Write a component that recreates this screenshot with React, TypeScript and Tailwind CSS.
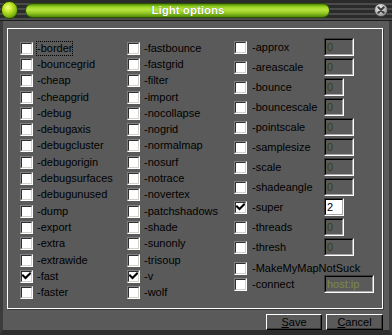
import React from 'react'

const leftCol = [
  '-border', '-bouncegrid', '-cheap', '-cheapgrid', '-debug', '-debugaxis', '-debugcluster', '-debugorigin',
  '-debugsurfaces', '-debugunused', '-dump', '-export', '-extra', '-extrawide', '-fast', '-faster',
]
const midCol = [
  '-fastbounce', '-fastgrid', '-filter', '-import', '-nocollapse', '-nogrid', '-normalmap', '-nosurf',
  '-notrace', '-novertex', '-patchshadows', '-shade', '-sunonly', '-trisoup', '-v', '-wolf',
]
const rightCol: { label: string; narrow?: boolean; checked?: boolean; value?: string }[] = [
  { label: '-approx' },
  { label: '-areascale' },
  { label: '-bounce', narrow: true },
  { label: '-bouncescale', narrow: true },
  { label: '-pointscale' },
  { label: '-samplesize' },
  { label: '-scale' },
  { label: '-shadeangle' },
  { label: '-super', narrow: true, checked: true, value: '2' },
  { label: '-threads', narrow: true },
  { label: '-thresh' },
]
const checkedSet = ['-fast', '-v']

function CheckBox({ checked }: { checked?: boolean }) {
  return (
    <div className="w-[13px] h-[13px] shrink-0 border border-t-[#808080] border-l-[#808080] border-b-white border-r-white">
      <div className="w-full h-full bg-white border border-t-[#303030] border-l-[#303030] border-b-[#d4d0c8] border-r-[#d4d0c8] flex items-center justify-center">
        {checked && (
          <svg width="9" height="9" viewBox="0 0 9 9">
            <path d="M1 3.5 L3.5 6 L8 1.5" fill="none" stroke="#000" strokeWidth="2" strokeLinecap="square" />
          </svg>
        )}
      </div>
    </div>
  )
}

function Field({ width, value, enabled, tone }: { width: string; value: string; enabled?: boolean; tone?: string }) {
  return (
    <div className={`${width} h-[18px] border border-t-[#3a3a3a] border-l-[#3a3a3a] border-b-white border-r-white`}>
      <div
        className={`w-full h-full border border-t-black border-l-black border-b-[#a8a8a8] border-r-[#a8a8a8] flex items-center pl-[1px] text-[11px] leading-[13px] ${
          enabled ? 'bg-white text-black' : `bg-[#5a5a5a] ${tone ?? 'text-[#33420f]'}`
        }`}
      >
        {value}
      </div>
    </div>
  )
}

function Row({ label, checked, focus }: { label: string; checked?: boolean; focus?: boolean }) {
  return (
    <div className="h-[16.3px] flex items-center gap-[4px]">
      <CheckBox checked={checked} />
      <span className={`leading-[13px] ${focus ? 'outline outline-1 outline-dotted outline-black' : ''}`}>{label}</span>
    </div>
  )
}

export default function App() {
  return (
    <div
      className="w-[392px] h-[335px] flex flex-col bg-[#5a5a5a] text-black text-[11px] overflow-hidden"
      style={{ fontFamily: "'Liberation Sans', Arial, sans-serif" }}
    >
      {/* Title bar */}
      <div className="h-[21px] shrink-0 flex items-center border-b border-[#1e1e1e] bg-[repeating-linear-gradient(180deg,#2b2b2b_0px,#2b2b2b_3px,#4b4b4b_3px,#4b4b4b_5px)]">
        <div className="ml-[1px] w-[17px] h-[18px] rounded-full border border-[#2a4a00] bg-[radial-gradient(circle_at_40%_35%,#f2ff8a_0%,#c4e82a_30%,#7db512_65%,#335f02_100%)]" />
        <div className="ml-[7px] w-[305px] h-[15px] rounded-full border border-[#2c5200] bg-[linear-gradient(180deg,#4f8a0a_0%,#9ad424_22%,#b8e43e_45%,#92c822_70%,#4f8c0c_100%)] flex items-center justify-center pl-[21px]">
          <span className="text-white font-bold text-[11.5px] leading-[13px] [text-shadow:0_0_1px_#3a6a00]">Light options</span>
        </div>
        <div className="flex-1" />
        <svg className="mr-[4px]" width="14" height="14" viewBox="0 0 14 14">
          <defs>
            <radialGradient id="cg" cx="40%" cy="35%" r="70%">
              <stop offset="0%" stopColor="#f4f4f4" />
              <stop offset="100%" stopColor="#8e8e8e" />
            </radialGradient>
          </defs>
          <circle cx="7" cy="7" r="6.5" fill="url(#cg)" stroke="#3a3a3a" strokeWidth="0.8" />
          <path d="M4.3 4.3 L9.7 9.7 M9.7 4.3 L4.3 9.7" stroke="#404040" strokeWidth="2" strokeLinecap="round" />
        </svg>
      </div>

      {/* Body */}
      <div className="flex-1 flex flex-col border-l-[3px] border-r-[3px] border-b-[5px] border-l-[#3c3c3c] border-r-[#3c3c3c] border-b-[#2e2e2e] pt-[7px] pl-[4px] pr-[6px]">
        <div className="h-[281px] border border-white shadow-[1px_1px_0_#3a3a3a] flex pl-[12px]">
          <div className="w-[107px] flex flex-col pt-[11px]">
            {leftCol.map((l, i) => (
              <Row key={l} label={l} checked={checkedSet.includes(l)} focus={i === 0} />
            ))}
          </div>
          <div className="w-[107px] flex flex-col pt-[11px]">
            {midCol.map((l) => (
              <Row key={l} label={l} checked={checkedSet.includes(l)} />
            ))}
          </div>
          <div className="flex-1 flex flex-col pt-[9px]">
            {rightCol.map((r) => (
              <div key={r.label} className="h-[18px] mb-[2px] flex items-center">
                <CheckBox checked={r.checked} />
                <span className="ml-[5px] w-[72px] leading-[13px]">{r.label}</span>
                <Field width={r.narrow ? 'w-[20px]' : 'w-[30px]'} value={r.value ?? '0'} enabled={r.checked} />
              </div>
            ))}
            <div className="h-[16px] mt-[2px] flex items-center">
              <CheckBox />
              <span className="ml-[5px] leading-[13px]">-MakeMyMapNotSuck</span>
            </div>
            <div className="h-[18px] mt-[-1px] flex items-center">
              <CheckBox />
              <span className="ml-[5px] w-[72px] leading-[13px]">-connect</span>
              <Field width="w-[50px]" value="host:ip" tone="text-[#7a8a46]" />
            </div>
          </div>
        </div>

        <div className="mt-[5px] flex justify-end gap-[4px]">
          <button className="w-[56px] h-[16px] border border-t-white border-l-white border-b-black border-r-black shadow-[inset_-1px_-1px_0_#3a3a3a] bg-[#5a5a5a] text-[11px] leading-[13px] flex items-center justify-center">
            <span><u className="underline-offset-1">S</u>ave</span>
          </button>
          <button className="w-[57px] h-[16px] border border-t-white border-l-white border-b-black border-r-black shadow-[inset_-1px_-1px_0_#3a3a3a] bg-[#5a5a5a] text-[11px] leading-[13px] flex items-center justify-center">
            <span><u className="underline-offset-1">C</u>ancel</span>
          </button>
        </div>
      </div>
    </div>
  )
}
